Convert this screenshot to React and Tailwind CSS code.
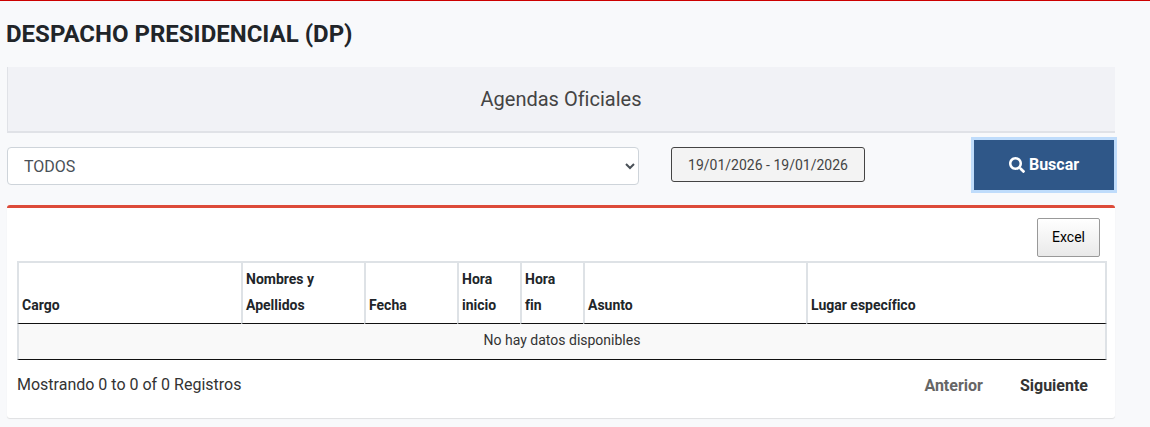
import { FaSearch } from "react-icons/fa";

const columns = [
  { label: ["Cargo"], width: "w-[224px]" },
  { label: ["Nombres y", "Apellidos"], width: "w-[123px]" },
  { label: ["Fecha"], width: "w-[93px]" },
  { label: ["Hora", "inicio"], width: "w-[63px]" },
  { label: ["Hora", "fin"], width: "w-[63px]" },
  { label: ["Asunto"], width: "w-[223px]" },
  { label: ["Lugar específico"], width: "w-[301px]" },
];

export default function App() {
  return (
    <div className="h-[427px] overflow-hidden border-t border-[#cc0000] bg-[#f8f9fb] font-['Roboto',sans-serif] text-[#212529] [font-variant-ligatures:none]">
      <div className="ml-[7px] w-[1108px]">
        <h1 className="-ml-px flex h-[66px] items-center pb-[1px] text-2xl leading-none font-bold text-[#212529]">
          DESPACHO PRESIDENCIAL (DP)
        </h1>

        <div className="flex h-[66px] items-center justify-center border-b-2 border-l border-[#e0e2e7] bg-[#f1f2f6] pr-[1px] text-xl text-[#444]">
          Agendas Oficiales
        </div>

        <div className="flex h-[72px] items-start">
          <select className="mt-[14px] h-[38px] w-[632px] rounded border border-[#ced4da] bg-white px-3 text-base text-[#495057]">
            <option>TODOS</option>
          </select>
          <div className="mt-[14px] ml-8 flex h-[35px] w-[194px] items-center justify-center rounded-[3px] border border-[#444] bg-[#f3f3f3] text-sm text-[#444]">
            19/01/2026 - 19/01/2026
          </div>
          <button className="mt-[7px] ml-auto flex h-[50px] w-[140px] translate-x-[-1px] items-center justify-center gap-[4px] bg-[#2f5788] text-base font-bold text-white ring-[3px] ring-[#bfdcfb]">
            <FaSearch size={16} />
            Buscar
          </button>
        </div>

        <div className="h-[213px] rounded-[3px] border-t-[3px] border-[#dd4b39] bg-white px-[10px] shadow-[0_1px_1px_rgba(0,0,0,0.1)]">
          <div className="flex justify-end pt-[10px] pr-[5px]">
            <button className="h-[39px] w-[63px] rounded-[2px] border border-[#999] bg-gradient-to-b from-white to-[#e9e9e9] pb-[2px] text-sm text-black">
              Excel
            </button>
          </div>

          <table className="mt-1 w-[1090px] table-fixed border-separate border-spacing-0 text-sm">
            <thead>
              <tr>
                {columns.map((col) => (
                  <th
                    key={col.label[0]}
                    className={`${col.width} border-t-2 border-b border-l-2 border-t-[#dee2e6] border-b-[#111] border-l-[#dee2e6] px-[3px] pt-[3px] pb-[5px] text-left align-bottom leading-[26px] font-bold last:border-r-2 last:border-r-[#dee2e6]`}
                  >
                    {col.label.map((line) => (
                      <div key={line}>{line}</div>
                    ))}
                  </th>
                ))}
              </tr>
            </thead>
            <tbody>
              <tr>
                <td
                  colSpan={7}
                  className="h-[36px] border-r-2 border-b border-l-2 border-r-[#dee2e6] border-b-[#111] border-l-[#dee2e6] bg-[#f9f9f9] pb-[4px] text-center align-middle text-sm text-[#333]"
                >
                  No hay datos disponibles
                </td>
              </tr>
            </tbody>
          </table>

          <div className="flex items-center justify-between pt-[12px] pr-[17px]">
            <span className="text-base text-[#333]">Mostrando 0 to 0 of 0 Registros</span>
            <div className="flex gap-[37px] pt-[2px] text-base font-bold">
              <span className="text-[#666]">Anterior</span>
              <span className="text-[#333]">Siguiente</span>
            </div>
          </div>
        </div>
      </div>
    </div>
  );
}
